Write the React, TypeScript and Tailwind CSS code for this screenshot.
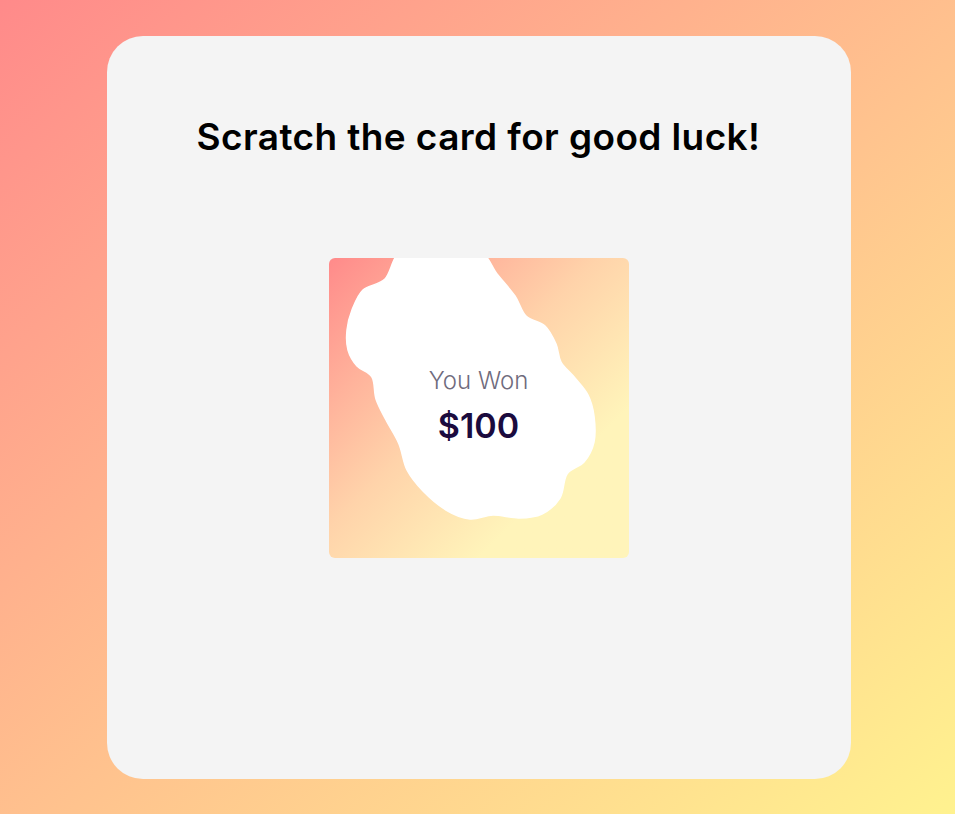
// outline of the scratched-off area, in card coordinates
const blob: [number, number][] = [
  [72, -6], [112, -8], [151, -6], [168, 16], [186, 38], [197, 58], [216, 68],
  [227, 86], [232, 104], [246, 120], [259, 137], [265, 158], [265, 184],
  [255, 204], [238, 216], [231, 240], [213, 256], [190, 260], [164, 257],
  [141, 261], [117, 252], [94, 233], [78, 212], [70, 186], [57, 162],
  [47, 141], [43, 119], [28, 108], [19, 92], [18, 72], [23, 52], [34, 32],
  [56, 21],
];

function smoothPath(pts: [number, number][]) {
  const n = pts.length;
  let d = `M${pts[0][0]} ${pts[0][1]}`;
  for (let i = 0; i < n; i++) {
    const p0 = pts[(i - 1 + n) % n];
    const p1 = pts[i];
    const p2 = pts[(i + 1) % n];
    const p3 = pts[(i + 2) % n];
    const c1x = p1[0] + (p2[0] - p0[0]) / 6;
    const c1y = p1[1] + (p2[1] - p0[1]) / 6;
    const c2x = p2[0] - (p3[0] - p1[0]) / 6;
    const c2y = p2[1] - (p3[1] - p1[1]) / 6;
    d += ` C${c1x.toFixed(1)} ${c1y.toFixed(1)} ${c2x.toFixed(1)} ${c2y.toFixed(1)} ${p2[0]} ${p2[1]}`;
  }
  return d + ' Z';
}

export default function App() {
  return (
    <div className="min-h-screen w-full flex items-center justify-center bg-gradient-to-br from-[#ff8a8a] to-[#fff28f] font-['Inter',sans-serif]">
      <div className="ml-[2px] w-[744px] h-[743px] rounded-[36px] bg-[#f4f4f4] flex flex-col items-center pt-[77px]">
        <h1 className="text-[37px] leading-[48px] font-semibold text-black tracking-[0.4px]">
          Scratch the card for good luck!
        </h1>

        {/* Scratch card */}
        <div className="mt-[97px] relative w-[300px] h-[300px] rounded-[6px] overflow-hidden bg-gradient-to-br from-[#ff8a8a] via-[#ffd3aa] via-45% to-[#fff4ba] to-75%">
          <svg className="absolute inset-0" width="300" height="300" viewBox="0 0 300 300">
            <path d={smoothPath(blob)} fill="#ffffff" stroke="#ffffff" strokeWidth="1.5" />
          </svg>
          <div className="absolute inset-0 flex flex-col items-center pt-[108px]">
            <div className="text-[24px] leading-[30px] font-light text-[#6f6b7d]">You Won</div>
            <div className="text-[34px] leading-[44px] font-semibold text-[#1b0b3e] mt-[8px]">$100</div>
          </div>
        </div>
      </div>
    </div>
  );
}
